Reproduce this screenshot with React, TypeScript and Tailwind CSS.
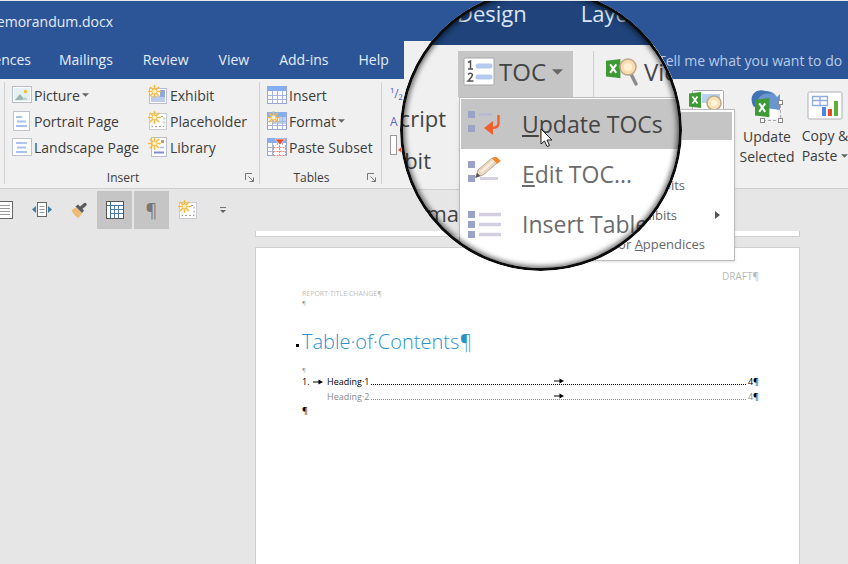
import type { ReactNode } from "react"
import clsx from "clsx"

/* ---------- icons ---------- */

function Spark({ x = 0, y = 0 }: { x?: number; y?: number }) {
  return (
    <g transform={`translate(${x} ${y})`} stroke="#f9b93c" strokeWidth="1.6" strokeLinecap="round">
      <path d="M6.500 0.8V12.2M0.8 6.500H12.2M2.300 2.300L10.700 10.700M10.700 2.300L2.300 10.700" />
      <circle cx="6.500" cy="6.500" r="2" fill="#fff3cf" stroke="none" />
    </g>
  )
}

function PictureIcon() {
  return (
    <svg width="20" height="20" viewBox="0 0 20 20" fill="none">
      <rect x="0.5" y="1.5" width="19" height="16" fill="#fff" stroke="#b9bcc0" />
      <rect x="2" y="3" width="16" height="13" fill="#e3f0f8" />
      <path d="M3 15L8 9L13 15Z" fill="#9fb5b0" />
      <path d="M10 15L13 12L16 15Z" fill="#bfcfca" />
      <circle cx="13.5" cy="6.5" r="1.8" fill="#e9c52c" />
    </svg>
  )
}

function PageIcon({ wide = false }: { wide?: boolean }) {
  return (
    <svg width="20" height="20" viewBox="0 0 20 20" fill="none">
      {wide ? (
        <rect x="0.5" y="1.5" width="19" height="17" fill="#fff" stroke="#bfc3ca" />
      ) : (
        <rect x="1.5" y="0.5" width="16" height="19" fill="#fff" stroke="#bfc3ca" />
      )}
      <path d="M4 6H10M5 10.5H14M4 15H15" stroke="#a9c1f0" strokeWidth="1.8" />
      {wide && <path d="M4 6H15" stroke="#a9c1f0" strokeWidth="1.8" />}
    </svg>
  )
}

function ExhibitIcon() {
  return (
    <svg width="20" height="20" viewBox="0 0 20 20" fill="none">
      <rect x="1.5" y="3.5" width="17" height="15" fill="#fff" stroke="#b9bfd0" />
      <rect x="3" y="11" width="14" height="6" fill="#b9ccec" />
      <rect x="12" y="5" width="5" height="7" fill="#93a9dc" />
      <Spark />
    </svg>
  )
}

function PlaceholderIcon() {
  return (
    <svg width="20" height="20" viewBox="0 0 20 20" fill="none">
      <rect x="1.5" y="2.5" width="17" height="16" fill="#fff" stroke="#c9ccd2" />
      <path d="M13 5.5H16V15.5H4V12" stroke="#9a9fa8" strokeDasharray="2 2" />
      <Spark />
    </svg>
  )
}

function LibraryIcon() {
  return (
    <svg width="20" height="20" viewBox="0 0 20 20" fill="none">
      <rect x="3.5" y="0.5" width="15" height="19" fill="#fff" stroke="#b9bfd0" />
      <rect x="13" y="3" width="3" height="3" fill="#b99a78" />
      <path d="M12 10.5H16" stroke="#a9c1f0" strokeWidth="1.6" />
      <path d="M6 15.5H16" stroke="#7d8ed0" strokeWidth="2" />
      <Spark />
    </svg>
  )
}

function TableIcon({ variant }: { variant: "insert" | "format" | "paste" }) {
  return (
    <svg width="20" height="20" viewBox="0 0 20 20" fill="none">
      <rect x="0.5" y="1.5" width="19" height="17" fill="#fff" stroke="#98a6d4" />
      <rect x="1" y="1" width="18" height="5" fill="#84aef0" />
      {variant === "format" && <path d="M12 6H19V13H7V10H12Z" fill="#bcd2f8" />}
      <path d="M0.5 10.5H19M0.5 14.5H19M5.5 6V18.5M10.5 6V18.5M15.5 6V18.5" stroke="#a9b3dc" />
      {variant === "format" && <Spark />}
      {variant === "paste" && (
        <>
          <rect x="7" y="8" width="12" height="11" fill="#fff" />
          <path d="M6.5 10.5H19M6.5 14.5H19M6.5 18.5H19M6.5 8V18.5M12.5 8V18.5M18.5 8V18.5" stroke="#f08a70" strokeDasharray="2 1" />
          <path d="M8 2H18L13 8Z" fill="#ee4b22" stroke="#fff" strokeWidth="0.6" />
        </>
      )}
    </svg>
  )
}

function Launcher() {
  return (
    <svg width="10" height="10" viewBox="0 0 10 10" fill="none" stroke="#777">
      <path d="M0.5 7V0.5H7M3.5 3.5L8.5 8.5M8.5 4.5V8.5H4.5" />
    </svg>
  )
}

function Caret({ className = "w-[7px] h-1" }: { className?: string }) {
  return (
    <svg className={className} viewBox="0 0 8 4" fill="#666">
      <path d="M0 0H8L4 4Z" />
    </svg>
  )
}

function ExcelMark({ x, y, s }: { x: number; y: number; s: number }) {
  return (
    <g transform={`translate(${x} ${y}) scale(${s})`}>
      <path d="M0 1.5L12 0V16L0 14.5Z" fill="#3d9a35" />
      <path d="M3.5 4.5L8.5 11.5M8.5 4.5L3.5 11.5" stroke="#fff" strokeWidth="1.7" />
    </g>
  )
}

function ViewLinkIcon() {
  return (
    <svg width="36" height="32" viewBox="0 0 36 32" fill="none">
      <rect x="3.5" y="0.5" width="31" height="26" rx="1" fill="#fff" stroke="#a6abb5" />
      <rect x="13" y="4" width="18" height="9" fill="#b9d2ee" />
      <ExcelMark x={0} y={2} s={1} />
      <circle cx="25" cy="13" r="7" fill="#fbe3b5" stroke="#b9a78e" strokeWidth="1.5" />
      <circle cx="25" cy="13" r="3" fill="#fff6dd" />
    </svg>
  )
}

function UpdateSelectedIcon() {
  return (
    <svg width="32" height="33" viewBox="0 0 32 33" fill="none">
      <path d="M12 30.500H29.500V12" fill="none" stroke="#aaa" strokeDasharray="3 2" />
      <path d="M19 17L27 20V29H17Z" fill="#fff" />
      <path d="M5 17C2 8 9 0 17 1C22 2 24 4 26 7L29 4V20L15 18L18 14C16 8 10 9 8 17Z" fill="#6a96d0" />
      <path d="M3 17C-3 8 3 -1 12 0.500C17 1 20 3 22 5C13 1 6 6 6 16Z" fill="#3f73b5" />
      <ExcelMark x={4} y={8} s={1.2} />
      <g fill="#fff" stroke="#888">
        <rect x="9.500" y="28.5" width="4" height="4" />
        <rect x="27.5" y="28.5" width="4" height="4" />
        <rect x="27.5" y="10.5" width="4" height="4" />
      </g>
    </svg>
  )
}

function CopyPasteIcon() {
  return (
    <svg width="36" height="32" viewBox="0 0 36 32" fill="none">
      <rect x="1" y="2" width="34" height="27" rx="1.500" fill="#fff" stroke="#aaaeb5" />
      <path d="M5.500 6.500H20.500V15.500H5.500ZM5.500 10.500H20.500M13 6.500V15.500" stroke="#8eabe4" strokeWidth="1.300" />
      <rect x="15" y="17" width="4" height="9" fill="#4f83e8" />
      <rect x="21" y="19" width="4" height="7" fill="#e84a2e" />
      <rect x="27" y="11" width="4" height="15" fill="#5cb03a" />
    </svg>
  )
}

function DocLinesIcon() {
  return (
    <svg width="14" height="20" viewBox="0 0 14 20" fill="none">
      <rect x="-4" y="1.500" width="16.500" height="17" fill="#fff" stroke="#666" />
      <path d="M0 5.500H10M0 8.500H10M0 11.500H10M0 14.500H10" stroke="#999" />
    </svg>
  )
}

function DocArrowsIcon() {
  return (
    <svg width="20" height="18" viewBox="0 0 20 18" fill="none">
      <rect x="5.500" y="1.500" width="9" height="14" fill="#fff" stroke="#666" />
      <path d="M7.500 5.500H12.500M7.500 8.500H12.500M7.500 11.500H12.500" stroke="#999" />
      <path d="M4 5V12L0 8.500ZM16 5V12L20 8.500Z" fill="#3f7ba8" />
    </svg>
  )
}

function BrushIcon() {
  return (
    <svg width="18" height="18" viewBox="0 0 18 18" fill="none">
      <path d="M0.500 9L5 6.500L11 12.500L7.500 17Q3 15 0.500 9Z" fill="#eebb76" />
      <path d="M4.500 5.500L7 3.500L13 9.500L11 12Z" fill="#5b5b5b" />
      <path d="M10.500 6.500L14 3.500" stroke="#5b5b5b" strokeWidth="3.400" strokeLinecap="round" />
    </svg>
  )
}

function GridIcon() {
  return (
    <svg width="18" height="18" viewBox="0 0 18 18" fill="none">
      <rect x="0.500" y="0.500" width="17" height="17" fill="#fff" stroke="#555" />
      <path d="M1 4.500H17M4.500 1V17" stroke="#3a6ea5" />
      <path d="M5 8.500H17M5 12.500H17M8.500 5V17M12.500 5V17" stroke="#4f7ba8" />
    </svg>
  )
}

function TocIcon() {
  return (
    <svg width="32" height="30" viewBox="0 0 32 30" fill="none">
      <rect x="1" y="1" width="30" height="27" rx="1" fill="#fff" stroke="#a8a8a8" />
      <path d="M5 5.500L7.500 4V12M5 12H10" stroke="#555" strokeWidth="1.500" />
      <path d="M5 17.500Q7.500 15 9.500 17.500Q9.500 19.500 5 24H10.500" stroke="#555" strokeWidth="1.500" />
      <path d="M15 9H27M15 20H27" stroke="#b5cbee" strokeWidth="5" strokeLinecap="round" />
    </svg>
  )
}

function MagnifyExcelIcon() {
  return (
    <svg width="34" height="32" viewBox="0 0 34 32" fill="none">
      <ExcelMark x={0} y={3} s={1.2} />
      <path d="M25 18L30 28" stroke="#8b8b8b" strokeWidth="3.500" strokeLinecap="round" />
      <circle cx="22" cy="11" r="8" fill="#fbdcae" stroke="#bba58c" strokeWidth="1.500" />
      <circle cx="22" cy="11" r="4" fill="#fff0d4" />
    </svg>
  )
}

function ListIcon({ kind }: { kind: "update" | "edit" | "insert" }) {
  return (
    <svg width="34" height="34" viewBox="0 0 34 34" fill="none">
      <g fill="#9aa2c8">
        <rect x="0" y="4" width="7" height="7" />
        {kind === "insert" && <rect x="0" y="14" width="7" height="7" />}
        <rect x="0" y={kind === "insert" ? 24 : 18} width="7" height="7" />
      </g>
      {kind === "update" && (
        <>
          <path d="M11 7.500H24" stroke="#b9b9cf" strokeWidth="3" />
          <path d="M30.500 8V16Q30.500 21 24 21" stroke="#f0602c" strokeWidth="2.400" />
          <path d="M16 21L25 14V28Z" fill="#f0602c" />
        </>
      )}
      {kind === "edit" && (
        <>
          <path d="M12 21.500H30" stroke="#d6d0e4" strokeWidth="3" />
          <path d="M8 20L10 13L24 1L29 6L15 18Z" fill="#ead9c2" stroke="#b8a894" />
          <path d="M13 15L26 3.500" stroke="#faf1e2" strokeWidth="2" />
          <path d="M24 1L27.500 -1L33 4L29 7Z" fill="#f28a30" />
          <path d="M7 21L9 16L12.500 19Z" fill="#555" />
        </>
      )}
      {kind === "insert" && <path d="M11 7.500H33M11 17.500H33M11 27.500H33" stroke="#d3cfe0" strokeWidth="3.500" />}
    </svg>
  )
}

/* ---------- ribbon ---------- */

const tabs = ["Mailings", "Review", "View", "Add-ins", "Help"]

function RibbonItem({ icon, label, menu }: { icon: ReactNode; label: string; menu?: boolean }) {
  return (
    <button className="flex h-[26px] items-center gap-[2px] whitespace-nowrap">
      {icon}
      <span>{label}</span>
      {menu && <Caret />}
    </button>
  )
}

function RibbonGroup({ label, className, children }: { label: string; className: string; children: ReactNode }) {
  return (
    <section className={clsx("flex shrink-0 flex-col border-l border-[#d2d2d2]", className)} aria-label={label}>
      <div className="flex flex-1">{children}</div>
      <div className="flex items-center pr-1 text-[12px] leading-3">
        <span className="flex-1 pr-1 text-center">{label}</span>
        <button aria-label={`${label} options`}>
          <Launcher />
        </button>
      </div>
    </section>
  )
}

function BigButton({ icon, className, children }: { icon: ReactNode; className: string; children?: ReactNode }) {
  return (
    <button className={clsx("flex shrink-0 flex-col items-center justify-start gap-1 pt-2 leading-5 whitespace-nowrap", className)}>
      {icon}
      <span>{children}</span>
    </button>
  )
}

function Ribbon() {
  return (
    <div className="flex h-[110px] overflow-hidden border-b border-[#cfcfcf] bg-[#f0f0f0] pt-[3px] pb-1 pl-1">
      <RibbonGroup label="Insert" className="w-[255px]">
        <div className="w-[136px] pl-[7px]">
          <RibbonItem icon={<PictureIcon />} label="Picture" menu />
          <RibbonItem icon={<PageIcon />} label="Portrait Page" />
          <RibbonItem icon={<PageIcon wide />} label="Landscape Page" />
        </div>
        <div className="pl-[7px]">
          <RibbonItem icon={<ExhibitIcon />} label="Exhibit" />
          <RibbonItem icon={<PlaceholderIcon />} label="Placeholder" />
          <RibbonItem icon={<LibraryIcon />} label="Library" />
        </div>
      </RibbonGroup>
      <RibbonGroup label="Tables" className="w-[122px]">
        <div className="pl-[7px]">
          <RibbonItem icon={<TableIcon variant="insert" />} label="Insert" />
          <RibbonItem icon={<TableIcon variant="format" />} label="Format" menu />
          <RibbonItem icon={<TableIcon variant="paste" />} label="Paste Subset" />
        </div>
      </RibbonGroup>
      <div className="w-[298px] shrink-0 border-l border-[#d2d2d2] pl-2 text-[12px] text-[#5b68b8]">
        <div className="h-[26px] leading-6">¹/₂</div>
        <div className="h-[26px] leading-7">A</div>
        <svg width="18" height="22" viewBox="0 0 18 22" fill="none">
          <rect x="0.500" y="1.500" width="6" height="19" fill="#fff" stroke="#999" />
          <path d="M8 16L14 11V20Z" fill="#ee4b22" />
        </svg>
      </div>
      <BigButton icon={<ViewLinkIcon />} className="w-[56px]" />
      <BigButton icon={<UpdateSelectedIcon />} className="w-[64px]">
        Update
        <br />
        Selected
      </BigButton>
      <BigButton icon={<CopyPasteIcon />} className="w-[52px]">
        Copy &amp;
        <br />
        <span className="inline-flex items-center gap-1">
          Paste <Caret />
        </span>
      </BigButton>
    </div>
  )
}

function QuickAccess() {
  return (
    <div className="flex h-[42px] items-center">
      <button className="w-8" aria-label="Document">
        <DocLinesIcon />
      </button>
      <button className="w-[39px]" aria-label="Page width">
        <DocArrowsIcon />
      </button>
      <button className="w-[26px]" aria-label="Format painter">
        <BrushIcon />
      </button>
      <button className="flex h-[38px] w-[35px] items-center justify-center bg-[#c5c5c5]" aria-label="Gridlines">
        <GridIcon />
      </button>
      <button className="ml-[2px] h-[38px] w-[35px] bg-[#c5c5c5] text-[18px] text-[#777]">¶</button>
      <button className="ml-[9px] w-[42px]" aria-label="Insert placeholder">
        <PlaceholderIcon />
      </button>
      <button className="flex flex-col items-center gap-[2px]" aria-label="Customize">
        <span className="h-px w-[6px] bg-[#777]" />
        <Caret className="h-[3px] w-[6px]" />
      </button>
    </div>
  )
}

/* ---------- document ---------- */

function TabArrow() {
  return (
    <svg width="10" height="6" viewBox="0 0 10 6">
      <path d="M0 3H7" stroke="#000" />
      <path d="M5.500 0.500L10 3L5.500 5.500Z" />
    </svg>
  )
}

function TocLine({ number, title, muted }: { number?: string; title: string; muted?: boolean }) {
  return (
    <div className={clsx("flex h-[15px] items-center text-[9px]", muted ? "text-[#8a8a8a]" : "text-black")}>
      <span className="flex w-[25px] items-center gap-[3px]">
        {number}
        {number && <TabArrow />}
      </span>
      <span>{title}</span>
      <span className="mx-[2px] flex h-[6px] flex-1 items-center justify-center border-b border-dotted border-current">
        <TabArrow />
      </span>
      <span>
        4<span className="text-black">¶</span>
      </span>
    </div>
  )
}

function DocumentArea() {
  return (
    <main className="flex flex-1 flex-col pr-12 pl-[255px]">
      <div className="h-[6px] border-x border-b border-[#cfcfcf] bg-white" />
      <article className="mt-[10px] flex-1 border border-b-0 border-[#cfcfcf] bg-white pt-5 pr-10 pl-[46px]">
        <div className="text-right text-[10px] leading-4 text-[#b9b9b9]">DRAFT¶</div>
        <div className="mt-1 text-[7px] leading-[12px] text-[#bdbdbd]">REPORT·TITLE·CHANGE¶</div>
        <div className="text-[6px] leading-[6px] text-[#999]">¶</div>
        <h1 className="relative mt-5 text-[20px] leading-8 font-light text-[#2b93cb]">
          <span className="absolute top-[18px] -left-[6px] size-[3px] bg-black" />
          Table·of·Contents¶
        </h1>
        <div className="mt-2 text-[6px] leading-[8px] text-[#999]">¶</div>
        <TocLine number="1." title="Heading·1" />
        <TocLine title="Heading·2" muted />
        <div className="text-[9px] leading-[14px] text-black">¶</div>
      </article>
    </main>
  )
}

/* ---------- menu and magnifier ---------- */

function BackMenu() {
  return (
    <div className="absolute top-[108px] left-[500px] w-[235px] border border-[#bdbdbd] bg-white p-[2px] text-right text-[13px] leading-[30px] text-[#666] shadow-sm">
      <div className="h-[28px] bg-[#c5c5c5]" />
      <div className="h-[30px]" />
      <div className="pr-[47px]">Exhibits</div>
      <div className="flex items-center justify-end gap-[38px] pr-[12px]">
        Exhibits
        <svg width="5" height="8" viewBox="0 0 5 8" fill="#555">
          <path d="M0 0L5 4L0 8Z" />
        </svg>
      </div>
      <div className="pr-[27px] leading-[28px]">
        for <u>A</u>ppendices
      </div>
    </div>
  )
}

function LensItem({ kind, active, children }: { kind: "update" | "edit" | "insert"; active?: boolean; children: ReactNode }) {
  return (
    <button
      className={clsx(
        "flex h-[50px] w-full items-center gap-[20px] pl-[7px] whitespace-nowrap",
        active ? "bg-[#c5c5c5] text-[#444]" : "text-[#6b6b6b]"
      )}
    >
      <ListIcon kind={kind} />
      <span>{children}</span>
    </button>
  )
}

function Magnifier() {
  return (
    <div className="absolute -top-3 left-[400px] size-[282px] overflow-hidden rounded-full bg-white">
      <div className="flex h-14 gap-[54px] bg-[#1f437a] pt-2 pl-[57px] text-[22px] leading-8 text-[#dce6f5]">
        <span>Design</span>
        <span>Layout</span>
      </div>
      <div className="flex h-[52px] bg-[#f0f0f0] pt-[6px] pl-[58px] text-[24px] text-[#444]">
        <button className="flex w-[115px] shrink-0 items-center gap-1 bg-[#c5c5c5] pb-1 pl-[5px]">
          <TocIcon />
          TOC
          <Caret className="ml-[2px] h-[6px] w-[11px]" />
        </button>
        <div className="ml-5 flex items-center gap-1 border-l border-[#cfcfcf] pb-1 pl-3">
          <MagnifyExcelIcon />
          View
        </div>
      </div>
      <div className="flex">
        <div className="w-[59px] shrink-0 overflow-hidden bg-[#e6e6e6] text-right text-[22px] text-[#444]">
          <div className="h-[92px] bg-[#f0f0f0] leading-[42px]">
            <div className="flex justify-end pr-[13px]">Script</div>
            <div className="flex justify-end pr-[28px]">Exhibit</div>
          </div>
          <div className="flex h-[46px] justify-end border-t border-[#cfcfcf] leading-[46px]">Forma</div>
          <div className="h-[4px] bg-white" />
          <div className="mt-[10px] h-10 border-t border-[#cfcfcf] bg-white" />
        </div>
        <div className="flex-1 border-t border-l border-[#bdbdbd] bg-white pt-px pl-px text-[23px] shadow-md">
          <LensItem kind="update" active>
            <u>U</u>pdate TOCs
          </LensItem>
          <LensItem kind="edit">
            <u>E</u>dit TOC...
          </LensItem>
          <LensItem kind="insert">Insert Table</LensItem>
        </div>
      </div>
      <div className="pointer-events-none absolute inset-0 rounded-full border-[3px] border-[#0c0c0c] shadow-[inset_0_0_5px_2px_rgba(0,0,0,0.55)]" />
      <svg className="absolute top-[139px] left-[140px]" width="13" height="20" viewBox="0 0 13 20">
        <path d="M1 1V16L4.500 13L7 18.500L9.500 17.500L7 12H12Z" fill="#fff" stroke="#222" />
      </svg>
    </div>
  )
}

export default function App() {
  return (
    <div className="relative flex min-h-screen flex-col overflow-hidden border-t border-[#e4e9ee] bg-[#e6e6e6] font-['Open_Sans',sans-serif] text-[14px] text-[#3c3c3c]">
      <header className="bg-[#2b5597] text-[#e6edf7]">
        <div className="flex h-10 w-[113px] items-center justify-end overflow-hidden">Memorandum.docx</div>
        <nav className="flex h-[38px] items-center">
          <a href="#references" className="flex w-[44px] justify-end overflow-hidden pr-[13px] pb-[2px]">
            References
          </a>
          {tabs.map((tab) => (
            <a key={tab} href={`#${tab}`} className="px-[15px] pb-[2px]">
              {tab}
            </a>
          ))}
          <div className="h-full w-[200px] self-stretch bg-[#f0f0f0]" />
          <input
            aria-label="Tell me what you want to do"
            placeholder="Tell me what you want to do"
            className="ml-auto w-[190px] bg-transparent placeholder:text-[#b9cbe6]"
          />
        </nav>
      </header>
      <Ribbon />
      <QuickAccess />
      <DocumentArea />
      <BackMenu />
      <Magnifier />
    </div>
  )
}
